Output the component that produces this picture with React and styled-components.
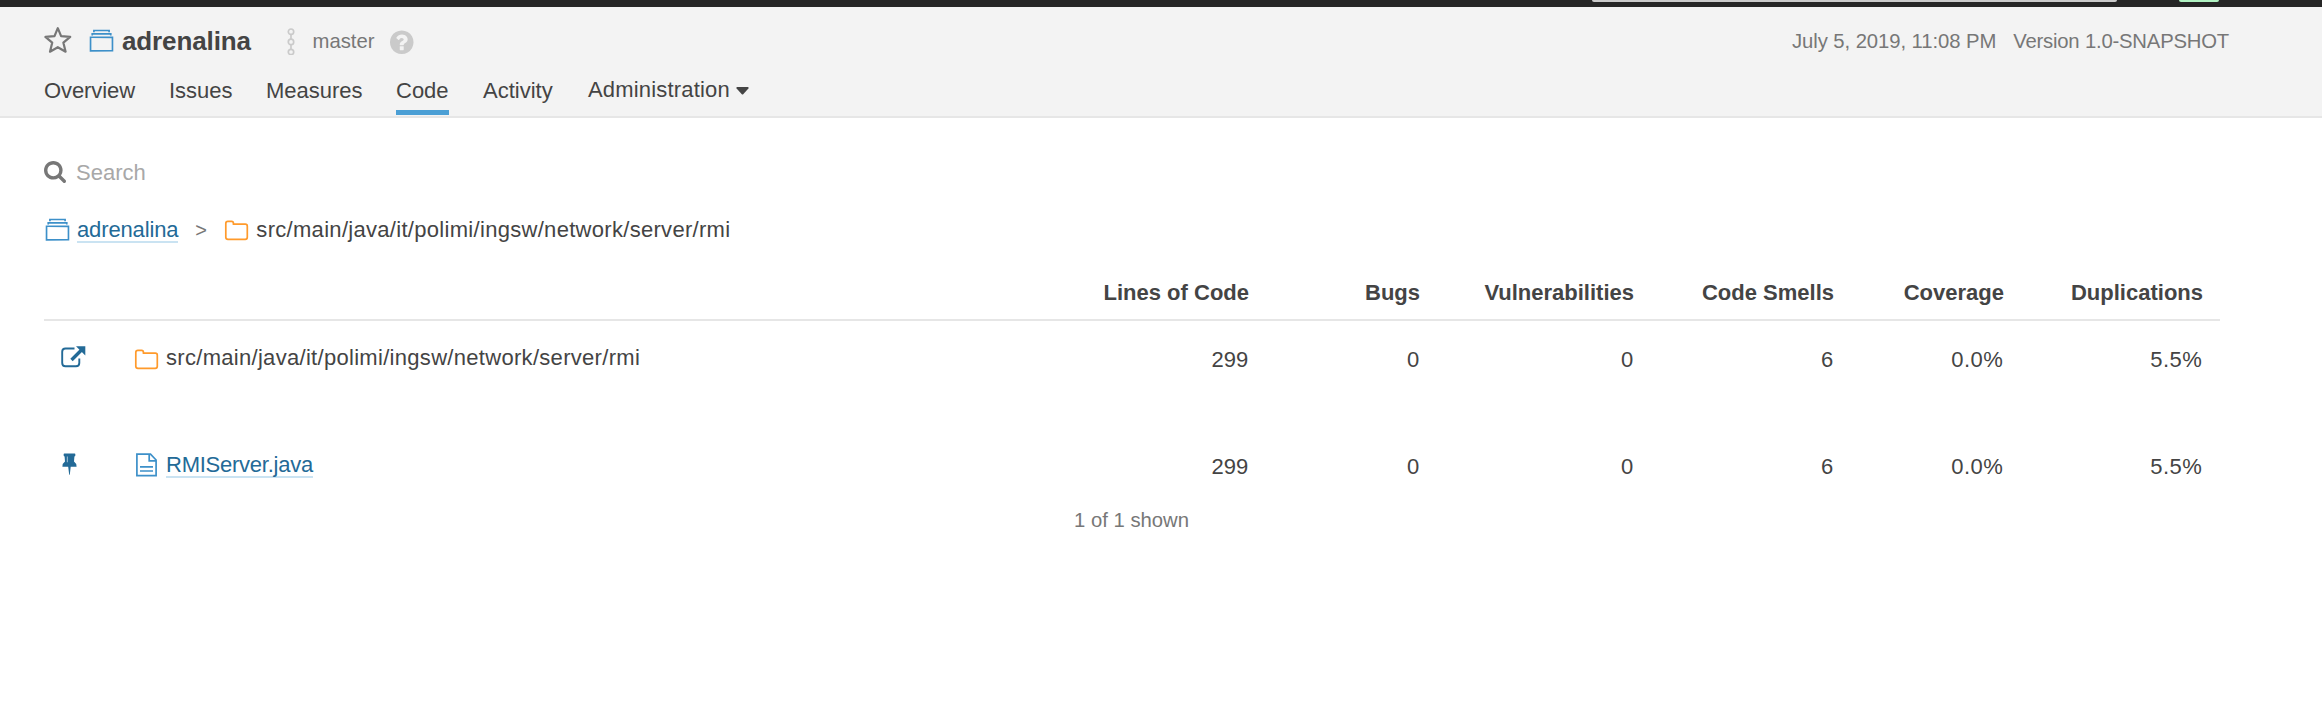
import React from 'react';
import styled, { createGlobalStyle } from 'styled-components';

const Global = createGlobalStyle`
  * { box-sizing: border-box; }
  body { margin: 0; background: #fff; font-family: "Liberation Sans", Arial, sans-serif; font-size: 22px; color: #444; }
  svg { display: block; flex: none; }
`;

const Page = styled.div`min-height: 710px; background: #fff;`;

const TopBar = styled.div`
  display: flex;
  gap: 62px;
  height: 7px;
  padding-left: 1592px;
  background: #262626;
`;
const TopStub = styled.div`
  width: ${(p) => p.$w}px;
  height: 2px;
  background: ${(p) => p.$color};
  border-radius: 0 0 3px 3px;
`;

const Header = styled.header`
  height: 111px;
  padding: 14px 93px 0 44px;
  background: #f3f3f3;
  border-bottom: 2px solid #e6e6e6;
`;
const HeaderRow = styled.div`
  display: flex;
  align-items: center;
  height: 40px;
`;
const ProjectName = styled.h1`
  margin: 0 0 0 7px;
  width: 164px;
  font-size: 26px;
  line-height: 40px;
  letter-spacing: -0.12px;
  font-weight: 700;
`;
const Branch = styled.span`
  width: 75px;
  margin-left: 16.5px;
  padding-top: 1px;
  font-size: 20.3px;
  color: #777;
  white-space: nowrap;
`;
const Meta = styled.div`
  display: flex;
  gap: 17px;
  margin-left: auto;
  font-size: 20.3px;
  color: #777;
  white-space: nowrap;
`;
const MetaItem = styled.span`letter-spacing: ${(p) => p.$ls}px;`;

const Tabs = styled.nav`
  display: flex;
  gap: 34px;
  height: 55px;
`;
const Tab = styled.a`
  display: flex;
  align-items: flex-start;
  gap: 6px;
  width: ${(p) => p.$w}px;
  height: 54px;
  padding-top: ${(p) => (p.$raised ? 16 : 17)}px;
  line-height: 26px;
  letter-spacing: ${(p) => p.$ls || 0}px;
  white-space: nowrap;
  box-shadow: ${(p) => (p.$active ? 'inset 0 -5px #4b9fd5' : 'none')};
`;
const CaretIcon = styled.svg`margin-top: 10px;`;

const Content = styled.main`padding: 42px 102px 0 44px;`;
const SearchBox = styled.div`
  display: flex;
  align-items: flex-start;
  gap: 10px;
  height: 26px;
  padding-top: 1px;
  line-height: 24px;
  color: #a8a8a8;
`;
const Crumbs = styled.div`
  display: flex;
  align-items: center;
  height: 26px;
  margin-top: 31px;
`;
const Link = styled.a`
  height: 26px;
  line-height: 25px;
  color: #236a97;
  letter-spacing: ${(p) => p.$ls || 0}px;
  border-bottom: 2px solid #cae3f2;
  white-space: nowrap;
`;
const CrumbLink = styled(Link)`margin: 0 17px 0 6px;`;
const Separator = styled.span`
  width: 28px;
  font-size: 20px;
  color: #777;
`;
const PathText = styled.span`
  margin-left: 6px;
  letter-spacing: 0.3px;
  white-space: nowrap;
`;

const Row = styled.div`
  display: grid;
  grid-template-columns: 89px 947px 169px 171px 214px 200px 170px 199px;
  height: ${(p) => p.$h}px;
`;
const HeadRow = styled(Row)`
  margin-top: 37px;
  font-weight: 700;
  border-bottom: 2px solid #e6e6e6;
`;
const HeadCell = styled.div`
  text-align: right;
  line-height: 26px;
  white-space: nowrap;
`;
const ActionCell = styled.div`padding: ${(p) => p.$top}px 0 0 ${(p) => p.$left}px;`;
const NameCell = styled.div`
  display: flex;
  align-items: center;
  height: 28px;
  margin-top: ${(p) => p.$top}px;
`;
const FileLink = styled(Link)`margin: 1px 0 0 9px;`;
const ValueCell = styled.div`
  padding: 26px 0.7px 0 0;
  text-align: right;
  line-height: 26px;
  letter-spacing: ${(p) => (p.$percent ? 0.5 : 0)}px;
`;
const Footer = styled.div`
  padding-left: 1030px;
  font-size: 20.3px;
  line-height: 24px;
  color: #777;
`;

const StarIcon = () => (
  <svg width="28" height="28" viewBox="0 0 28 28" fill="none" stroke="#777" strokeWidth="2.2" strokeLinejoin="round">
    <path d="M13.8 1.2 17.1 9.2 26.2 9.9 19.4 15.7 21.6 24.7 13.8 20.2 6 24.7 8.2 15.7 1.4 9.9 10.5 9.2Z" />
  </svg>
);
const ProjectIcon = () => (
  <svg width="27" height="27" viewBox="0 0 16 16" fill="#3d90c9">
    <path d="M14.985 13.988L1 14.005 1.02 5h13.966v8.988h-.001zM1.998 5.995l.006 7.02L14.022 13 14 6.004 1.998 5.995zM3 4.5V4h9.996l.004.5h1l-.005-1.497-11.98.003L2 4.5h1zm1-2v-.504h8.002L12 2.5h.997l-.001-1.492-9.99.005L3.003 2.5H4z" />
  </svg>
);
const BranchIcon = () => (
  <svg width="10" height="28" viewBox="0 0 10 28" fill="none" stroke="#cacaca" strokeWidth="1.7">
    <circle cx="5" cy="4.7" r="2.7" />
    <circle cx="5" cy="14.9" r="2.7" />
    <circle cx="5" cy="25" r="2.7" />
    <path d="M5 7.4v4.8M5 17.6v4.7" />
  </svg>
);
const HelpIcon = () => (
  <svg width="27.5" height="27.5" viewBox="0 -100 1792 1792" fill="#cacaca">
    <path d="M1024 1376v-192q0-14-9-23t-23-9h-192q-14 0-23 9t-9 23v192q0 14 9 23t23 9h192q14 0 23-9t9-23zm256-672q0-88-55.5-163t-138.5-116-170-41q-243 0-371 213-15 24 8 42l132 100q7 6 19 6 16 0 25-12 53-68 86-92 34-24 86-24 48 0 85.5 26t37.5 59q0 38-20 61t-68 45q-63 28-115.5 86.5t-52.5 125.5v36q0 14 9 23t23 9h192q14 0 23-9t9-23q0-19 21.5-49.5t54.5-49.5q32-18 49-28.5t46-35 44.5-48 28-60.5 12.5-81zm384 192q0 209-103 385.5t-279.5 279.5-385.5 103-385.5-103-279.5-279.5-103-385.5 103-385.5 279.5-279.5 385.5-103 385.5 103 279.5 279.5 103 385.5z" />
  </svg>
);
const SearchIcon = () => (
  <svg width="22" height="22" viewBox="64 128 1664 1664" fill="#777">
    <path d="M1216 832q0-185-131.5-316.5t-316.5-131.5-316.5 131.5-131.5 316.5 131.5 316.5 316.5 131.5 316.5-131.5 131.5-316.5zm512 832q0 52-38 90t-90 38q-54 0-90-38l-343-342q-179 124-399 124-143 0-273.5-55.5t-225-150-150-225-55.5-273.5 55.5-273.5 150-225 225-150 273.5-55.5 273.5 55.5 225 150 150 225 55.5 273.5q0 220-124 399l343 343q37 37 37 90z" />
  </svg>
);
const FolderIcon = () => (
  <svg width="27" height="27" viewBox="0 0 27 27" fill="none" stroke="#ff9a2b" strokeWidth="1.7" strokeLinejoin="round">
    <path d="M4.9 4.4H8.6Q10.4 4.4 10.4 6.2V7.2H22.3Q24.3 7.2 24.3 9.2V20.3Q24.3 22.3 22.3 22.3H4.9Q2.8 22.3 2.8 20.3V6.4Q2.8 4.4 4.9 4.4Z" />
  </svg>
);
const FileIcon = () => (
  <svg width="21" height="24" viewBox="0 0 21 24" fill="none" stroke="#3d90c9" strokeWidth="1.7">
    <path d="M.9 1.2H14.5L20.1 7V22.6H.9ZM13.2 1.2V7.8H20.1M4 13.8H17M4 18H17" />
  </svg>
);
const OpenIcon = () => (
  <svg width="25" height="22" viewBox="0 0 25 22" fill="none" stroke="#236a97" strokeWidth="1.9">
    <path d="M13.5 2.5H4.5Q1.2 2.5 1.2 5.7V17Q1.2 20.3 4.5 20.3H15Q18.3 20.3 18.3 17V12.5" />
    <path d="M10.5 14 20.5 4" strokeWidth="3.3" />
    <path d="M15 .3H24.3V9.6Z" fill="#236a97" stroke="none" />
  </svg>
);
const PinIcon = () => (
  <svg width="15" height="22" viewBox="0 0 15 22">
    <path fill="#236a97" d="M2.4 .5H12.6Q13.4 .5 13.4 1.9T12.4 3.4L12 8.4Q14.3 9.8 14.6 13.7H8.7L7.8 21.8H7.2L6.2 13.7H.4Q.6 9.8 3 8.4L2.6 3.4Q1.6 3.3 1.6 1.9T2.4 .5Z" />
    <path fill="#8fb4cb" d="M4.8 3.6H6V9.3H4.8Z" />
  </svg>
);
const Caret = () => (
  <CaretIcon width="13" height="8" viewBox="0 0 13 8" fill="#444">
    <path d="M1 0H12Q13 .5 12.4 1.4L7.2 7.2Q6.5 7.8 5.8 7.2L.6 1.4Q0 .5 1 0Z" />
  </CaretIcon>
);

const IconSlot = styled.span`
  margin-left: ${(p) => p.$left || 0}px;
  padding-top: ${(p) => p.$top || 0}px;
`;

const columns = ['Lines of Code', 'Bugs', 'Vulnerabilities', 'Code Smells', 'Coverage', 'Duplications'];
const values = ['299', '0', '0', '6', '0.0%', '5.5%'];
const path = 'src/main/java/it/polimi/ingsw/network/server/rmi';

const Values = () => values.map((v, i) => (
  <ValueCell key={i} $percent={v.endsWith('%')}>{v}</ValueCell>
));

export default function App() {
  return (
    <Page>
      <Global />
      <TopBar>
        <TopStub $w={525} $color="#cacaca" />
        <TopStub $w={40} $color="#b0f2c2" />
      </TopBar>
      <Header>
        <HeaderRow>
          <StarIcon />
          <IconSlot $left={16}><ProjectIcon /></IconSlot>
          <ProjectName>adrenalina</ProjectName>
          <BranchIcon />
          <Branch>master</Branch>
          <HelpIcon />
          <Meta>
            <MetaItem $ls={-0.08}>July 5, 2019, 11:08 PM</MetaItem>
            <MetaItem $ls={-0.2}>Version 1.0-SNAPSHOT</MetaItem>
          </Meta>
        </HeaderRow>
        <Tabs>
          <Tab $w={91} $ls={-0.08}>Overview</Tab>
          <Tab $w={63}>Issues</Tab>
          <Tab $w={96}>Measures</Tab>
          <Tab $w={53} $active>Code</Tab>
          <Tab $w={71}>Activity</Tab>
          <Tab $raised $ls={0.18}>Administration<Caret /></Tab>
        </Tabs>
      </Header>
      <Content>
        <SearchBox><SearchIcon />Search</SearchBox>
        <Crumbs>
          <ProjectIcon />
          <CrumbLink $ls={-0.14}>adrenalina</CrumbLink>
          <Separator>&gt;</Separator>
          <FolderIcon />
          <PathText>{path}</PathText>
        </Crumbs>
        <HeadRow $h={41}>
          <span />
          <span />
          {columns.map((c) => <HeadCell key={c}>{c}</HeadCell>)}
        </HeadRow>
        <Row $h={107}>
          <ActionCell $top={25} $left={17}><OpenIcon /></ActionCell>
          <NameCell $top={23}><IconSlot $top={3}><FolderIcon /></IconSlot><PathText>{path}</PathText></NameCell>
          <Values />
        </Row>
        <Row $h={80}>
          <ActionCell $top={25} $left={18}><PinIcon /></ActionCell>
          <NameCell $top={22}><IconSlot $left={3} $top={2}><FileIcon /></IconSlot><FileLink $ls={-0.25}>RMIServer.java</FileLink></NameCell>
          <Values />
        </Row>
        <Footer>1 of 1 shown</Footer>
      </Content>
    </Page>
  );
}
